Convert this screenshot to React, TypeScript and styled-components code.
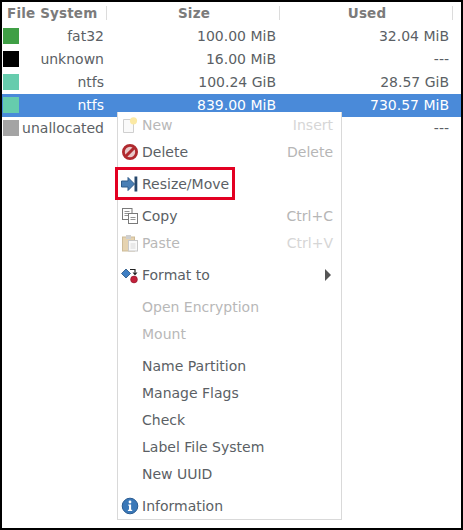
import React from "react";
import styled, { createGlobalStyle } from "styled-components";

const Global = createGlobalStyle`
  html, body { margin: 0; padding: 0; background: #000; }
  #root { width: 463px; height: 530px; overflow: hidden; }
`;

const Frame = styled.div`
  position: relative;
  box-sizing: border-box;
  width: 463px;
  height: 530px;
  background: #fff;
  border: 2px solid #000;
  font-family: "DejaVu Sans", sans-serif;
  font-size: 14px;
  overflow: hidden;
`;

const columns = "105px 173px 173px 1fr";

const HeaderRow = styled.div`
  display: grid;
  grid-template-columns: ${columns};
  box-sizing: border-box;
  height: 23px;
  padding-top: 4px;
  align-items: start;
`;

const HeaderCell = styled.div<{ $left?: boolean }>`
  font-weight: bold;
  font-size: 13.5px;
  color: #7b7b7b;
  text-align: ${(p) => (p.$left ? "left" : "center")};
  padding-left: ${(p) => (p.$left ? "5px" : "2px")};
  height: 14px;
  line-height: 14px;
  border-right: 1px solid #dcdcdc;
  white-space: nowrap;
  letter-spacing: 0.17px;
`;

const Row = styled.div<{ $selected?: boolean }>`
  display: grid;
  grid-template-columns: ${columns};
  box-sizing: border-box;
  height: 23px;
  padding-top: 3px;
  line-height: 16px;
  align-items: start;
  background: ${(p) => (p.$selected ? "#4a8ad9" : "transparent")};
  color: ${(p) => (p.$selected ? "#fff" : "#5b5f65")};
`;

const FsCell = styled.div`
  display: flex;
  align-items: flex-start;
  justify-content: space-between;
  padding: 0 3px 0 1px;
`;

const Swatch = styled.span<{ $color: string }>`
  width: 16px;
  height: 16px;
  background: ${(p) => p.$color};
  flex: none;
`;

const Value = styled.div`
  text-align: right;
  padding-right: 4px;
  white-space: nowrap;
`;

const Menu = styled.div`
  position: absolute;
  left: 115px;
  top: 110px;
  width: 225px;
  box-sizing: border-box;
  background: #fff;
  border: 1px solid #d9d9d9;
  border-top: 0;
`;

const Item = styled.div<{ $disabled?: boolean }>`
  position: relative;
  display: flex;
  align-items: center;
  height: 27px;
  padding: 0 8px 0 3px;
  color: ${(p) => (p.$disabled ? "#b8b8b8" : "#5b5f65")};

  &:first-child {
    margin-top: -1px;
  }
`;

const IconSlot = styled.span`
  width: 18px;
  height: 18px;
  margin-right: 3px;
  flex: none;
  display: flex;
`;

const Label = styled.span`
  flex: 1;
  white-space: nowrap;
`;

const Shortcut = styled.span<{ $faint?: boolean }>`
  color: ${(p) => (p.$faint ? "#d6d6d6" : "#b6b6b6")};
`;

const Arrow = styled.span`
  width: 0;
  height: 0;
  margin-right: 2px;
  border-left: 6px solid #555;
  border-top: 6px solid transparent;
  border-bottom: 6px solid transparent;
`;

const Separator = styled.div`
  height: 5px;
`;

const Highlight = styled.span`
  position: absolute;
  left: -3px;
  top: -3px;
  width: 120px;
  height: 33px;
  box-sizing: border-box;
  border: 3px solid #e30022;
  pointer-events: none;
`;

const NewIcon = () => (
  <svg width="18" height="18" viewBox="0 0 18 18">
    <path d="M2.5 3.5h8l2 2v11h-10z" fill="#fafafa" stroke="#cfcfcf" />
    <circle cx="12.5" cy="4.8" r="3.6" fill="#fbe9a4" />
  </svg>
);
const DeleteIcon = () => (
  <svg width="18" height="18" viewBox="0 0 18 18">
    <circle cx="9" cy="9" r="6.6" fill="#e8c9c9" stroke="#b02a2f" strokeWidth="2.8" />
    <path d="M4.5 13.5l9-9" stroke="#b02a2f" strokeWidth="3" />
  </svg>
);
const ResizeIcon = () => (
  <svg width="18" height="18" viewBox="0 0 18 18">
    <path d="M.5 6h6.5V2.5L13.5 9 7 15.5V12H.5z" fill="#4a7fb5" stroke="#2f5c8a" />
    <rect x="13.5" y="1.5" width="2.8" height="15" fill="#27486c" />
  </svg>
);
const CopyIcon = () => (
  <svg width="18" height="18" viewBox="0 0 18 18" fill="#fff" stroke="#7a7a7a">
    <rect x="1.5" y="1.5" width="9.5" height="11" />
    <path d="M3.5 4.5h5M3.5 6.5h5M3.5 8.5h5" strokeWidth=".8" />
    <rect x="7.5" y="6.5" width="9" height="10" />
    <path d="M9.5 10.5h5M9.5 12.5h5" strokeWidth=".8" />
  </svg>
);
const PasteIcon = () => (
  <svg width="18" height="18" viewBox="0 0 18 18">
    <rect x="1.5" y="3" width="12" height="14" fill="#e6d3b0" stroke="#cdbb98" />
    <rect x="5" y="1" width="5" height="4" fill="#cfcfcf" />
    <rect x="7.5" y="6.5" width="9" height="10.5" fill="#fafafa" stroke="#c8c8c8" />
    <path d="M9.5 10h5M9.5 12h5M9.5 14h5" stroke="#cfcfcf" strokeWidth=".8" />
  </svg>
);
const FormatIcon = () => (
  <svg width="18" height="18" viewBox="0 0 18 18">
    <path d="M5 3l4.5 4.5L5 12 .5 7.5z" fill="#3f7fc4" stroke="#24527f" strokeWidth=".8" />
    <path d="M9 3.5h5v3" fill="none" stroke="#222" strokeWidth="1.2" />
    <path d="M11.5 6.5h5l-2.5 3z" fill="#222" />
    <circle cx="13" cy="13.5" r="3.4" fill="#c3203a" stroke="#8b1428" strokeWidth=".6" />
  </svg>
);
const InfoIcon = () => (
  <svg width="18" height="18" viewBox="0 0 18 18">
    <circle cx="9" cy="9" r="7.8" fill="#3a78b8" stroke="#2a5c92" />
    <circle cx="9" cy="5" r="1.4" fill="#fff" />
    <path d="M7.3 7.6h2.8v5.2h1.1v1.2H6.9v-1.2h1.1V8.8h-.7z" fill="#fff" />
  </svg>
);

const rows = [
  { color: "#3f9f45", fs: "fat32", size: "100.00 MiB", used: "32.04 MiB" },
  { color: "#000000", fs: "unknown", size: "16.00 MiB", used: "---" },
  { color: "#66ccad", fs: "ntfs", size: "100.24 GiB", used: "28.57 GiB" },
  { color: "#66ccad", fs: "ntfs", size: "839.00 MiB", used: "730.57 MiB", selected: true },
  { color: "#a4a4a4", fs: "unallocated", size: "", used: "---" },
];

export default function App() {
  return (
    <Frame>
      <Global />
      <HeaderRow>
        <HeaderCell $left>File System</HeaderCell>
        <HeaderCell>Size</HeaderCell>
        <HeaderCell>Used</HeaderCell>
      </HeaderRow>
      {rows.map((r, i) => (
        <Row key={i} $selected={r.selected}>
          <FsCell>
            <Swatch $color={r.color} />
            {r.fs}
          </FsCell>
          <Value>{r.size}</Value>
          <Value>{r.used}</Value>
        </Row>
      ))}
      <Menu>
        <Item $disabled>
          <IconSlot><NewIcon /></IconSlot>
          <Label>New</Label>
          <Shortcut $faint>Insert</Shortcut>
        </Item>
        <Item>
          <IconSlot><DeleteIcon /></IconSlot>
          <Label>Delete</Label>
          <Shortcut>Delete</Shortcut>
        </Item>
        <Separator />
        <Item>
          <IconSlot><ResizeIcon /></IconSlot>
          <Label>Resize/Move</Label>
          <Highlight />
        </Item>
        <Separator />
        <Item>
          <IconSlot><CopyIcon /></IconSlot>
          <Label>Copy</Label>
          <Shortcut>Ctrl+C</Shortcut>
        </Item>
        <Item $disabled>
          <IconSlot><PasteIcon /></IconSlot>
          <Label>Paste</Label>
          <Shortcut $faint>Ctrl+V</Shortcut>
        </Item>
        <Separator />
        <Item>
          <IconSlot><FormatIcon /></IconSlot>
          <Label>Format to</Label>
          <Arrow />
        </Item>
        <Separator />
        <Item $disabled>
          <IconSlot />
          <Label>Open Encryption</Label>
        </Item>
        <Item $disabled>
          <IconSlot />
          <Label>Mount</Label>
        </Item>
        <Separator />
        <Item>
          <IconSlot />
          <Label>Name Partition</Label>
        </Item>
        <Item>
          <IconSlot />
          <Label>Manage Flags</Label>
        </Item>
        <Item>
          <IconSlot />
          <Label>Check</Label>
        </Item>
        <Item>
          <IconSlot />
          <Label>Label File System</Label>
        </Item>
        <Item>
          <IconSlot />
          <Label>New UUID</Label>
        </Item>
        <Separator />
        <Item>
          <IconSlot><InfoIcon /></IconSlot>
          <Label>Information</Label>
        </Item>
      </Menu>
    </Frame>
  );
}
